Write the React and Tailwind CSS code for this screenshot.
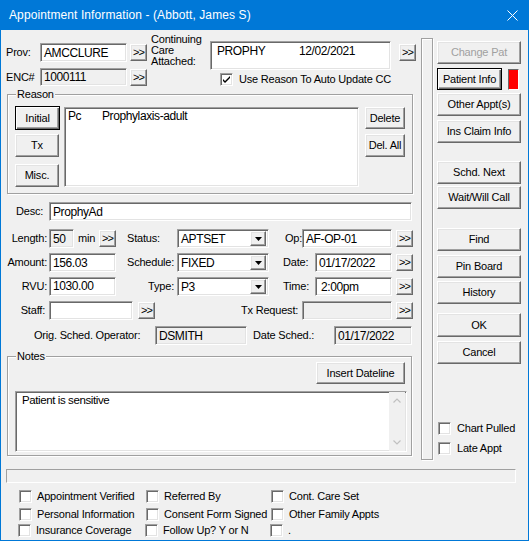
// Appointment Information — classic Windows dialog
import React from "react";

const SANS = "font-['Liberation_Sans',Arial,sans-serif]";

// raised 3D push button (classic theme)
const Btn = ({ children, className = "", disabled, def }) => (
  <div
    className={`flex items-center justify-center bg-[#f0f0f0] text-[11px] leading-none tracking-[-0.2px] ${
      def
        ? "border border-black shadow-[inset_1px_1px_0_#fff,inset_-1px_-1px_0_#696969,inset_-2px_-2px_0_#a0a0a0]"
        : "border border-t-white border-l-white border-b-[#696969] border-r-[#696969] shadow-[inset_-1px_-1px_0_#a0a0a0,inset_1px_1px_0_#e3e3e3]"
    } ${disabled ? "text-[#a0a0a0]" : "text-black"} ${className}`}
  >
    {children}
  </div>
);

const More = ({ className = "" }) => (
  <Btn className={`h-[17px] w-[17px] flex-none text-[9px] tracking-[-1px] ${className}`}>
    &gt;&gt;
  </Btn>
);

// sunken edit field
const Field = ({ children, className = "", grey }) => (
  <div
    className={`flex flex-none items-center overflow-hidden border border-t-[#a0a0a0] border-l-[#a0a0a0] border-b-white border-r-white pl-[3px] text-[12px] leading-none tracking-[-0.4px] shadow-[inset_1px_1px_0_#696969,inset_-1px_-1px_0_#e3e3e3] ${
      grey ? "bg-[#f0f0f0]" : "bg-white"
    } ${className}`}
  >
    {children}
  </div>
);

const Select = ({ value }) => (
  <Field className="h-[19px] w-[92px] pr-[2px]">
    <span className="flex-1">{value}</span>
    <Btn className="h-[15px] w-[16px] flex-none">
      <svg width="7" height="4" viewBox="0 0 7 4">
        <path d="M0 0h7L3.5 4z" fill="#000" />
      </svg>
    </Btn>
  </Field>
);

const Check = ({ checked }) => (
  <div className="flex h-[13px] w-[13px] flex-none items-center justify-center border border-t-[#a0a0a0] border-l-[#a0a0a0] border-b-white border-r-white bg-white shadow-[inset_1px_1px_0_#696969,inset_-1px_-1px_0_#e3e3e3]">
    {checked && (
      <svg width="9" height="9" viewBox="0 0 9 9">
        <path d="M1 4l2 2 5-5v2l-5 5-2-2z" fill="#000" />
      </svg>
    )}
  </div>
);

const CheckLabel = ({ label, checked, className = "", gap = "ml-[5px]" }) => (
  <div className={`flex h-[13px] items-center ${className}`}>
    <Check checked={checked} />
    <span className={`${gap} text-[11px] leading-none tracking-[-0.2px]`}>{label}</span>
  </div>
);

const Label = ({ children, className = "" }) => (
  <div className={`flex-none text-[11px] leading-none tracking-[-0.2px] ${className}`}>{children}</div>
);

const Group = ({ title, children, className = "" }) => (
  <fieldset className={`border border-[#a0a0a0] shadow-[inset_1px_1px_0_#fff,1px_1px_0_#fff] ${className}`}>
    <legend className="ml-[8px] bg-[#f0f0f0] px-[1px] text-[11px] leading-[13px] tracking-[-0.2px]">
      {title}
    </legend>
    {children}
  </fieldset>
);

const SIDE_BUTTONS = [
  { label: "Other Appt(s)", cls: "mt-[3px] h-[23px]" },
  { label: "Ins Claim Info", cls: "mt-[4px] h-[23px]" },
  { label: "Schd. Next", cls: "mt-[18px] h-[23px]" },
  { label: "Wait/Will Call", cls: "mt-[2px] h-[23px]" },
  { label: "Find", cls: "mt-[19px] h-[23px]" },
  { label: "Pin Board", cls: "mt-[4px] h-[23px]" },
  { label: "History", cls: "mt-[3px] h-[23px]" },
  { label: "OK", cls: "mt-[9px] h-[24px]" },
  { label: "Cancel", cls: "mt-[4px] h-[23px]" },
];

const FLAGS = [
  ["Appointment Verified", "Referred By", "Cont. Care Set"],
  ["Personal Information", "Consent Form Signed", "Other Family Appts"],
  ["Insurance Coverage", "Follow Up? Y or N", "."],
];

export default function App() {
  return (
    <div className={`flex h-[541px] w-[529px] flex-col bg-[#0078d7] text-black ${SANS}`}>
      {/* Title bar */}
      <div className="flex h-[30px] flex-none items-center pl-[9px] pr-[11px] text-white">
        <span className="text-[12px] tracking-[0.1px]">Appointment Information - (Abbott, James S)</span>
        <svg className="ml-auto" width="11" height="11" viewBox="0 0 11 11">
          <path d="M0.5 0.5l10 10M10.5 0.5l-10 10" stroke="#fff" strokeWidth="1" />
        </svg>
      </div>

      {/* Client area */}
      <div className="mx-px mb-px flex flex-1 flex-col bg-[#f0f0f0]">
        <div className="flex h-[433px] flex-none">
          {/* Left form */}
          <div className="ml-[5px] flex w-[411px] flex-none flex-col">
            {/* Provider / continuing care */}
            <div className="mt-[5px] flex h-[53px] flex-none items-start">
              <div className="flex w-[141px] flex-none flex-col pt-[8px]">
                <div className="flex h-[19px] items-center">
                  <Label className="w-[34px]">Prov:</Label>
                  <Field className="h-[19px] w-[87px]">AMCCLURE</Field>
                  <More className="ml-[3px]" />
                </div>
                <div className="mt-[6px] flex h-[18px] items-center">
                  <Label className="w-[34px]">ENC#</Label>
                  <Field grey className="h-[18px] w-[87px]">1000111</Field>
                  <More className="ml-[3px]" />
                </div>
              </div>
              <Label className="-mt-[1px] ml-[4px] w-[55px] leading-[13px]">
                Continuing
                <br />
                Care
                <br />
                Attached:
              </Label>
              <div className="ml-[4px] flex flex-col pt-[6px]">
                <div className="flex items-start">
                  <Field className="h-[29px] w-[181px] items-start pl-[6px] pt-[3px]">
                    <span className="w-[82px]">PROPHY</span>
                    <span>12/02/2021</span>
                  </Field>
                  <More className="ml-[8px] mt-[3px]" />
                </div>
                <CheckLabel checked label="Use Reason To Auto Update CC" className="ml-[10px] mt-[3px]" gap="ml-[6px]" />
              </div>
            </div>

            {/* Reason */}
            <Group title="Reason" className="ml-px w-[406px] flex-none">
              <div className="flex items-start pb-[6px] pl-[7px]">
                <div className="flex w-[45px] flex-col">
                  <Btn def className="mt-[5px] h-[24px] w-[45px]">Initial</Btn>
                  <Btn className="mt-[4px] h-[23px] w-[44px]">Tx</Btn>
                  <Btn className="mt-[7px] h-[23px] w-[44px]">Misc.</Btn>
                </div>
                <Field className="ml-[4px] mt-[6px] h-[80px] w-[295px] items-start pt-[2px] text-[11.5px]">
                  <span className="w-[34px]">Pc</span>
                  <span>Prophylaxis-adult</span>
                </Field>
                <div className="ml-[6px] flex flex-col">
                  <Btn className="mt-[6px] h-[22px] w-[40px]">Delete</Btn>
                  <Btn className="mt-[5px] h-[23px] w-[40px]">Del. All</Btn>
                </div>
              </div>
            </Group>

            {/* Desc */}
            <div className="mt-[8px] flex h-[19px] flex-none items-center">
              <Label className="w-[43px] pl-[10px]">Desc:</Label>
              <Field className="h-[19px] w-[363px]">ProphyAd</Field>
            </div>

            {/* Length / Status / Op */}
            <div className="mt-[8px] flex h-[19px] flex-none items-center">
              <Label className="w-[43px] pr-[2px] text-right">Length:</Label>
              <div className="flex w-[67px] items-center">
                <Field grey className="h-[19px] w-[25px]">50</Field>
                <Label className="ml-[4px]">min</Label>
                <More className="ml-auto" />
              </div>
              <Label className="w-[61px] pl-[11px]">Status:</Label>
              <Select value="APTSET" />
              <Label className="w-[33px] pl-[16px]">Op:</Label>
              <Field className="h-[19px] w-[90px]">AF-OP-01</Field>
              <More className="ml-[4px]" />
            </div>

            {/* Amount / Schedule / Date */}
            <div className="mt-[5px] flex h-[19px] flex-none items-center">
              <Label className="w-[43px] pr-[2px] text-right">Amount:</Label>
              <Field className="h-[19px] w-[67px]">156.03</Field>
              <Label className="w-[61px] pl-[11px]">Schedule:</Label>
              <Select value="FIXED" />
              <Label className="w-[46px] pl-[14px]">Date:</Label>
              <Field className="h-[19px] w-[77px]">01/17/2022</Field>
              <More className="ml-[4px]" />
            </div>

            {/* RVU / Type / Time */}
            <div className="mt-[5px] flex h-[19px] flex-none items-center">
              <Label className="w-[43px] pr-[2px] text-right">RVU:</Label>
              <Field className="h-[19px] w-[67px] items-start pt-[2px]">1030.00</Field>
              <Label className="w-[61px] pr-[3px] text-right">Type:</Label>
              <Select value="P3" />
              <Label className="w-[46px] pl-[14px]">Time:</Label>
              <Field className="h-[19px] w-[77px] pl-[5px]">2:00pm</Field>
              <More className="ml-[4px]" />
            </div>

            {/* Staff / Tx Request */}
            <div className="mt-[5px] flex h-[19px] flex-none items-center">
              <Label className="w-[43px] pr-[4px] text-right">Staff:</Label>
              <Field className="h-[19px] w-[84px]" />
              <More className="ml-[5px]" />
              <Label className="ml-[86px] w-[61px]">Tx Request:</Label>
              <Field grey className="h-[19px] w-[90px]" />
              <More className="ml-[4px]" />
            </div>

            {/* Original scheduling */}
            <div className="mt-[6px] flex h-[19px] flex-none items-center">
              <Label className="w-[149px] pl-[28px]">Orig. Sched. Operator:</Label>
              <Field grey className="h-[19px] w-[92px]">DSMITH</Field>
              <Label className="ml-[6px] w-[81px]">Date Sched.:</Label>
              <Field grey className="h-[19px] w-[78px]">01/17/2022</Field>
            </div>

            {/* Notes */}
            <Group title="Notes" className="ml-px mt-[5px] w-[405px] flex-none">
              <div className="-mt-px flex flex-col pb-[3px]">
                <Btn className="ml-auto mr-[6px] h-[22px] w-[89px]">Insert Dateline</Btn>
                <Field className="ml-[7px] mt-[7px] h-[61px] w-[392px] items-stretch pl-0 pr-px">
                  <div className="flex-1 pl-[3px] pt-[3px] text-[11.5px] leading-none">Patient is sensitive</div>
                  <div className="flex w-[16px] flex-none flex-col items-center justify-between bg-[#f0f0f0] py-[6px]">
                    <svg width="8" height="5" viewBox="0 0 8 5">
                      <path d="M0.5 4.5l3.5-3.5 3.5 3.5" fill="none" stroke="#c0c0c0" strokeWidth="1.2" />
                    </svg>
                    <svg width="8" height="5" viewBox="0 0 8 5">
                      <path d="M0.5 0.5l3.5 3.5 3.5-3.5" fill="none" stroke="#c0c0c0" strokeWidth="1.2" />
                    </svg>
                  </div>
                </Field>
              </div>
            </Group>
          </div>

          {/* Etched separator */}
          <div className="ml-[4px] mt-[8px] h-[422px] w-[12px] flex-none border border-[#a0a0a0] shadow-[inset_1px_1px_0_#fff,1px_1px_0_#fff]" />

          {/* Right buttons */}
          <div className="ml-[4px] flex w-[84px] flex-none flex-col">
            <Btn disabled className="mt-[11px] h-[23px]">Change Pat</Btn>
            <div className="mt-[4px] flex h-[22px] items-center">
              <Btn def className="h-[22px] w-[65px]">Patient Info</Btn>
              <div className="ml-[6px] h-[21px] w-[11px] border border-t-[#696969] border-l-[#696969] border-b-white border-r-white bg-[#ff0000]" />
            </div>
            {SIDE_BUTTONS.map((b) => (
              <Btn key={b.label} className={b.cls}>
                {b.label}
              </Btn>
            ))}
            <CheckLabel label="Chart Pulled" className="ml-px mt-[58px]" gap="ml-[6px]" />
            <CheckLabel label="Late Appt" className="ml-px mt-[7px]" gap="ml-[6px]" />
          </div>
        </div>

        {/* Status strip */}
        <div className="ml-[5px] mt-[6px] h-[14px] w-[510px] flex-none border border-t-[#a0a0a0] border-l-[#a0a0a0] border-b-white border-r-white" />

        {/* Flags */}
        {FLAGS.map((row, i) => (
          <div
            key={i}
            className={`flex h-[13px] flex-none ${
              i === 0 ? "mt-[7px] pl-[18px]" : i === 1 ? "mt-[5px] pl-[18px]" : "mt-[3px] pl-[17px]"
            }`}
          >
            {row.map((label, j) => (
              <CheckLabel
                key={label}
                label={label}
                className={j === 0 ? "w-[127px]" : j === 1 ? "w-[125px]" : ""}
              />
            ))}
          </div>
        ))}
      </div>
    </div>
  );
}
